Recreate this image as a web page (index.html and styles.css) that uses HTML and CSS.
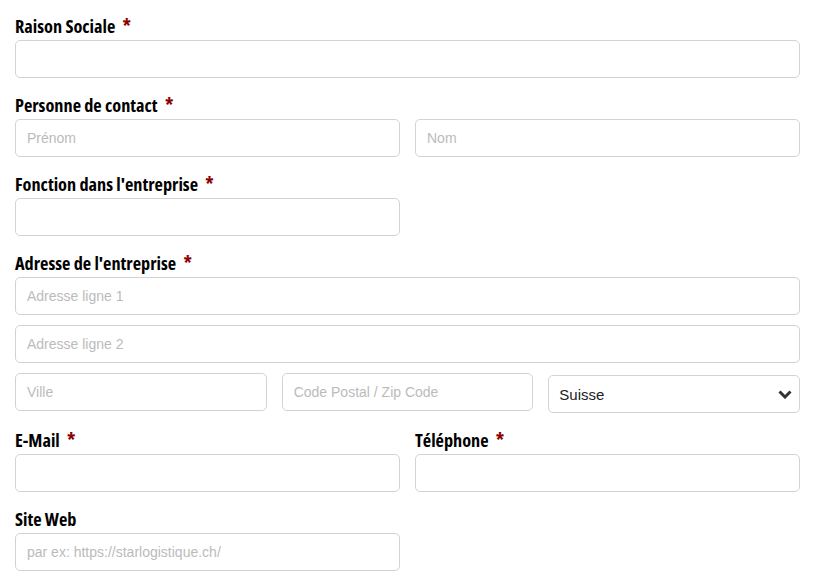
FILE: index.html
```html
<!DOCTYPE html>
<html lang="fr">
<head>
  <meta charset="UTF-8">
  <meta name="viewport" content="width=device-width, initial-scale=1.0">
  <title>Inscription entreprise</title>
  <link rel="stylesheet" href="styles.css">
</head>
<body>
  <form id="company-form" class="company-form">
    <div class="form-group">
      <label for="raison">Raison Sociale <span class="req">*</span></label>
      <input type="text" id="raison" name="raison">
    </div>

    <div class="form-group">
      <label for="prenom">Personne de contact <span class="req">*</span></label>
      <div class="row cols-2">
        <input type="text" id="prenom" name="prenom" placeholder="Prénom">
        <input type="text" id="nom" name="nom" placeholder="Nom">
      </div>
    </div>

    <div class="form-group">
      <label for="fonction">Fonction dans l'entreprise <span class="req">*</span></label>
      <div class="row cols-2">
        <input type="text" id="fonction" name="fonction">
      </div>
    </div>

    <div class="form-group">
      <label for="adresse1">Adresse de l'entreprise <span class="req">*</span></label>
      <div class="stack">
        <input type="text" id="adresse1" name="adresse1" placeholder="Adresse ligne 1">
        <input type="text" id="adresse2" name="adresse2" placeholder="Adresse ligne 2">
        <div class="row cols-3">
          <input type="text" id="ville" name="ville" placeholder="Ville">
          <input type="text" id="npa" name="npa" placeholder="Code Postal / Zip Code">
          <div class="select-wrap">
            <select id="pays" name="pays">
              <option>Suisse</option>
              <option>France</option>
              <option>Allemagne</option>
              <option>Italie</option>
            </select>
            <svg class="chevron" width="14" height="9" viewBox="0 0 14 9" aria-hidden="true">
              <path d="M1.5 1.5 L7 7 L12.5 1.5" fill="none" stroke="#333" stroke-width="3"/>
            </svg>
          </div>
        </div>
      </div>
    </div>

    <div class="row cols-2">
      <div class="form-group">
        <label for="email">E-Mail <span class="req">*</span></label>
        <input type="email" id="email" name="email">
      </div>
      <div class="form-group">
        <label for="tel">Téléphone <span class="req">*</span></label>
        <input type="tel" id="tel" name="tel">
      </div>
    </div>

    <div class="form-group">
      <label for="site">Site Web</label>
      <div class="row cols-2">
        <input type="url" id="site" name="site" placeholder="par ex: https://starlogistique.ch/">
      </div>
    </div>
  </form>
</body>
</html>
```

FILE: styles.css
```css
body {
  margin: 0;
  padding: 15px 36px 0 15px;
  font-family: "Liberation Sans", Arial, sans-serif;
  font-size: 14px;
  color: #222;
  background: #fff;
}
.form-group {
  margin-bottom: 16px;
}
.row .form-group {
  margin-bottom: 0;
}
.company-form > .row {
  margin-bottom: 16px;
}
label {
  display: block;
  margin-bottom: 3px;
  font-family: "Open Sans", sans-serif;
  font-stretch: 75%;
  font-weight: 700;
  font-size: 18.25px;
  line-height: 22px;
  color: #000;
}
.req {
  color: #8b0000;
  margin-left: 4px;
  font-size: 19px;
}
input,
select {
  display: block;
  width: 100%;
  height: 38px;
  padding: 0 11px;
  box-sizing: border-box;
  border: 1px solid #d3d3d3;
  border-radius: 5px;
  font-family: "Liberation Sans", Arial, sans-serif;
  font-size: 14px;
  color: #222;
  background: #fff;
}
input::placeholder {
  color: #bbb;
}
.row {
  display: grid;
  gap: 15px;
}
.cols-2 {
  grid-template-columns: 1fr 1fr;
}
.cols-3 {
  grid-template-columns: 1fr 1fr 1fr;
}
.stack {
  display: flex;
  flex-direction: column;
  gap: 10px;
}
.select-wrap {
  position: relative;
  margin-top: 2px;
}
select {
  appearance: none;
  -webkit-appearance: none;
  padding: 0 30px 0 10px;
  font-size: 15px;
}
.chevron {
  position: absolute;
  right: 8px;
  top: 15px;
  pointer-events: none;
}
```
